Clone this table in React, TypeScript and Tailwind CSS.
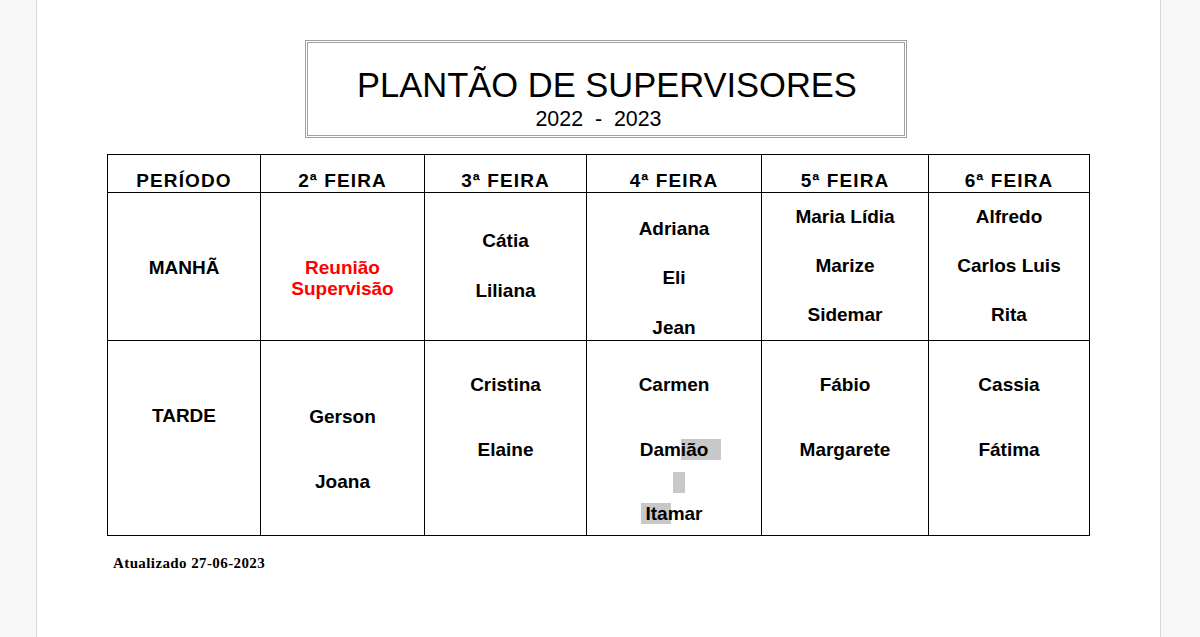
import React from 'react';

const sans = "font-['Liberation_Sans',Arial,sans-serif]";

type Line = { text: string; gap?: number };

const Cell: React.FC<{ pt: number; lines: Line[]; red?: boolean; leading?: string }> = ({ pt, lines, red, leading = 'leading-[22px]' }) => (
  <div className="border-r border-b border-black flex flex-col items-center" style={{ paddingTop: pt }}>
    {lines.map((l, i) => (
      <div
        key={i}
        className={`${leading} text-[19px] font-bold whitespace-nowrap ${red ? 'text-[#ff0000]' : 'text-black'}`}
        style={i > 0 ? { marginTop: l.gap ?? 0 } : undefined}
      >
        {l.text}
      </div>
    ))}
  </div>
);

const headers = ['PERÍODO', '2ª FEIRA', '3ª FEIRA', '4ª FEIRA', '5ª FEIRA', '6ª FEIRA'];

export default function App() {
  return (
    <div className={`min-h-screen bg-[#f8f8f8] flex ${sans}`}>
      <div className="ml-[36px] w-[1125px] min-h-[637px] bg-white border-x border-[#d9d9d9] pt-[40px]">
        {/* Title box */}
        <div className="ml-[268px] w-[602px] h-[98px] border-[3px] border-double border-[#a0a0a0] flex flex-col items-center pt-[22px]">
          <div className="text-[34.5px] leading-[40px] text-black pl-[2px]">PLANTÃO DE SUPERVISORES</div>
          <div className="text-[21.4px] leading-[24px] mt-[2px] text-black whitespace-pre mr-[15px]">2022  -  2023</div>
        </div>

        {/* Schedule table */}
        <div className="mt-[16px] ml-[70px] w-fit grid grid-cols-[153px_164px_162px_175px_167px_161px] grid-rows-[38px_148px_195px] border-l border-t border-black">
          {headers.map((h) => (
            <div key={h} className="border-r border-b border-black flex justify-center pt-[15px]">
              <span className="text-[19px] leading-[22px] font-bold tracking-[1.1px] text-black">{h}</span>
            </div>
          ))}

          {/* Manhã */}
          <Cell pt={64} lines={[{ text: 'MANHÃ' }]} />
          <Cell pt={64} red leading="leading-[21px]" lines={[{ text: 'Reunião' }, { text: 'Supervisão' }]} />
          <Cell pt={37} lines={[{ text: 'Cátia' }, { text: 'Liliana', gap: 28 }]} />
          <Cell pt={25} lines={[{ text: 'Adriana' }, { text: 'Eli', gap: 27 }, { text: 'Jean', gap: 28 }]} />
          <Cell pt={13} lines={[{ text: 'Maria Lídia' }, { text: 'Marize', gap: 27 }, { text: 'Sidemar', gap: 27 }]} />
          <Cell pt={13} lines={[{ text: 'Alfredo' }, { text: 'Carlos Luis', gap: 27 }, { text: 'Rita', gap: 27 }]} />

          {/* Tarde */}
          <Cell pt={64} lines={[{ text: 'TARDE' }]} />
          <Cell pt={65} lines={[{ text: 'Gerson' }, { text: 'Joana', gap: 43 }]} />
          <Cell pt={33} lines={[{ text: 'Cristina' }, { text: 'Elaine', gap: 43 }]} />
          <div className="border-r border-b border-black flex flex-col items-center pt-[33px] text-[19px] font-bold text-black">
            <div className="leading-[22px]">Carmen</div>
            <div className="leading-[22px] mt-[43px]">
              Dam<span className="bg-[#c8c8c8] pr-[13px] -mr-[13px]">ião</span>
            </div>
            <div className="w-[12px] h-[21px] bg-[#c8c8c8] mt-[11px] ml-[10px]" />
            <div className="leading-[22px] mt-[10px]">
              <span className="bg-[#c8c8c8] pl-[4px] pr-[3px] -ml-[4px] -mr-[3px]">Ita</span>mar
            </div>
          </div>
          <Cell pt={33} lines={[{ text: 'Fábio' }, { text: 'Margarete', gap: 43 }]} />
          <Cell pt={33} lines={[{ text: 'Cassia' }, { text: 'Fátima', gap: 43 }]} />
        </div>

        <div className="ml-[76px] mt-[17px] text-[15px] leading-[20px] font-bold tracking-[0.4px] text-black font-['Liberation_Serif','Times_New_Roman',serif]">
          Atualizado 27-06-2023
        </div>
      </div>
    </div>
  );
}
